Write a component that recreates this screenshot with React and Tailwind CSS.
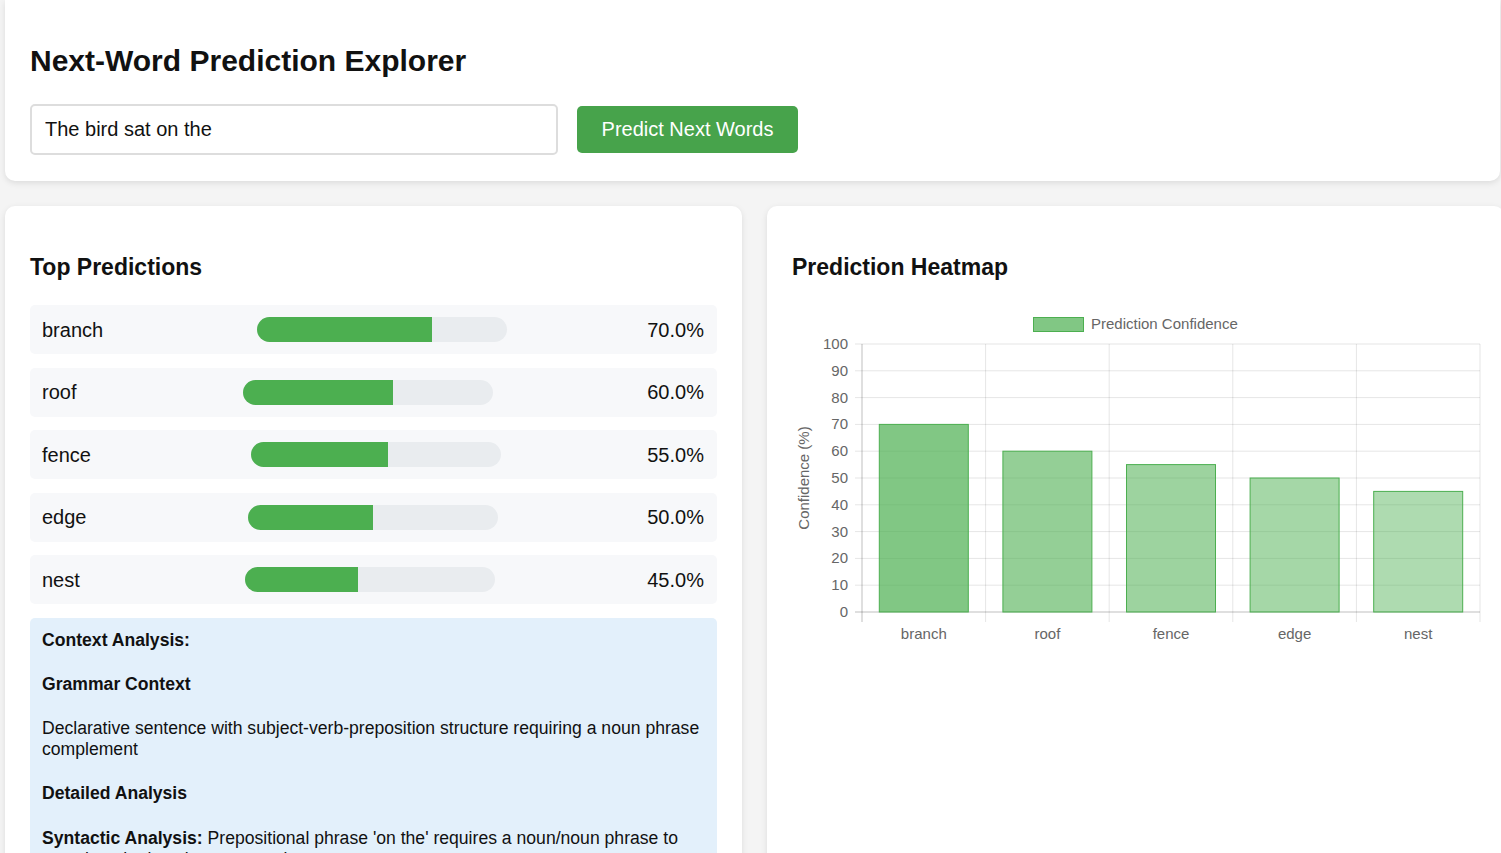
import React, { useState } from "react";

const predictions = [
  { word: "branch", value: 70 },
  { word: "roof", value: 60 },
  { word: "fence", value: 55 },
  { word: "edge", value: 50 },
  { word: "nest", value: 45 },
];

const ticks = [0, 10, 20, 30, 40, 50, 60, 70, 80, 90, 100];

const Heatmap = () => {
  const x0 = 70;
  const x1 = 688;
  const yBase = 307;
  const step = 2.68;
  const catW = (x1 - x0) / predictions.length;
  const barW = catW * 0.72;

  return (
    <svg width="700" height="350" className="block">
      {/* legend */}
      <rect x="241.5" y="12.5" width="50" height="14" fill="rgba(76,175,80,0.7)" stroke="rgb(76,175,80)" strokeWidth="1" />
      <text x="299" y="24" fontSize="15" fill="#666" fontFamily="Liberation Sans, Arial, sans-serif">
        Prediction Confidence
      </text>

      {/* horizontal grid + ticks */}
      {ticks.map((t) => {
        const y = yBase - t * step;
        return (
          <g key={t}>
            <line x1="63" x2={x1} y1={y} y2={y} stroke={t === 0 ? "rgba(0,0,0,0.25)" : "rgba(0,0,0,0.1)"} strokeWidth="1" />
            <text x="56" y={y + 5} fontSize="15" fill="#666" textAnchor="end" fontFamily="Liberation Sans, Arial, sans-serif">
              {t}
            </text>
          </g>
        );
      })}

      {/* vertical grid */}
      {predictions.concat([null]).map((_, i) => {
        const x = x0 + i * catW;
        return (
          <line key={i} x1={x} x2={x} y1={yBase - 100 * step} y2="317" stroke={i === 0 ? "rgba(0,0,0,0.25)" : "rgba(0,0,0,0.1)"} strokeWidth="1" />
        );
      })}

      {/* bars */}
      {predictions.map((p, i) => {
        const h = p.value * step;
        const x = x0 + i * catW + (catW - barW) / 2;
        return (
          <g key={p.word}>
            <rect
              x={x}
              y={yBase - h}
              width={barW}
              height={h}
              fill={`rgba(76,175,80,${p.value / 100})`}
              stroke="rgb(76,175,80)"
              strokeWidth="1"
            />
            <text
              x={x0 + i * catW + catW / 2}
              y="334"
              fontSize="15"
              fill="#666"
              textAnchor="middle"
              fontFamily="Liberation Sans, Arial, sans-serif"
            >
              {p.word}
            </text>
          </g>
        );
      })}

      {/* axis title */}
      <text
        x="13"
        y="173"
        transform="rotate(-90 13 173)"
        fontSize="15"
        fill="#666"
        textAnchor="middle"
        dominantBaseline="middle"
        fontFamily="Liberation Sans, Arial, sans-serif"
      >
        Confidence (%)
      </text>
    </svg>
  );
};

const App = () => {
  const [text, setText] = useState("The bird sat on the");

  return (
    <div className="w-[1501px] h-[853px] overflow-hidden bg-[#f4f4f4] text-[#111] font-['Liberation_Sans',Arial,sans-serif]">
      <div className="pl-[5px] flex flex-col gap-[25px]">
        {/* Header card */}
        <div className="w-[1495px] bg-white rounded-b-[10px] shadow-[0_2px_6px_rgba(0,0,0,0.1)] px-[25px] pt-[44px] pb-[26px]">
          <h1 className="text-[30px] font-bold leading-[34px] m-0">Next-Word Prediction Explorer</h1>
          <div className="flex items-center gap-[19px] mt-[26px]">
            <input
              value={text}
              onChange={(e) => setText(e.target.value)}
              className="w-[528px] h-[51px] border-2 border-[#dddddd] rounded-[5px] px-[13px] text-[20px] text-[#111] outline-none"
            />
            <button className="w-[221px] h-[47px] pb-[1px] bg-[#47a34b] text-white text-[20px] rounded-[5px]">
              Predict Next Words
            </button>
          </div>
        </div>

        {/* Panels */}
        <div className="grid grid-cols-[737px_737px] gap-[25px]">
          <div className="bg-white rounded-[10px] shadow-[0_2px_6px_rgba(0,0,0,0.1)] px-[25px] pt-[48px] pb-[25px]">
            <h3 className="text-[23px] font-bold leading-[26px] mb-[25px]">Top Predictions</h3>

            {predictions.map((p) => (
              <div
                key={p.word}
                className="h-[49px] mb-[13.5px] flex items-center justify-between pl-[12px] pr-[13px] bg-[#f7f8fa] rounded-[5px]"
              >
                <span className="text-[20px]">{p.word}</span>
                <div className="w-[250px] h-[25px] ml-[13px] rounded-full bg-[#e9ecef] overflow-hidden">
                  <div className="h-full bg-[#4caf50]" style={{ width: `${p.value}%` }} />
                </div>
                <span className="text-[20px]">{p.value.toFixed(1)}%</span>
              </div>
            ))}

            <div className="bg-[#e3f0fb] rounded-[5px] px-[12px] pt-[12px] pb-[12px] text-[17.6px] leading-[21px] flex flex-col gap-[23px]">
              <p className="font-bold">Context Analysis:</p>
              <p className="font-bold">Grammar Context</p>
              <p>Declarative sentence with subject-verb-preposition structure requiring a noun phrase complement</p>
              <p className="font-bold">Detailed Analysis</p>
              <p className="mt-[1px]">
                <span className="font-bold">Syntactic Analysis:</span> Prepositional phrase 'on the' requires a noun/noun phrase to
                complete the locative construction
              </p>
            </div>
          </div>

          <div className="bg-white rounded-[10px] shadow-[0_2px_6px_rgba(0,0,0,0.1)] px-[25px] pt-[48px] pb-[25px]">
            <h3 className="text-[23px] font-bold leading-[26px] mb-[25px]">Prediction Heatmap</h3>
            <Heatmap />
          </div>
        </div>
      </div>
    </div>
  );
};

export default App;
